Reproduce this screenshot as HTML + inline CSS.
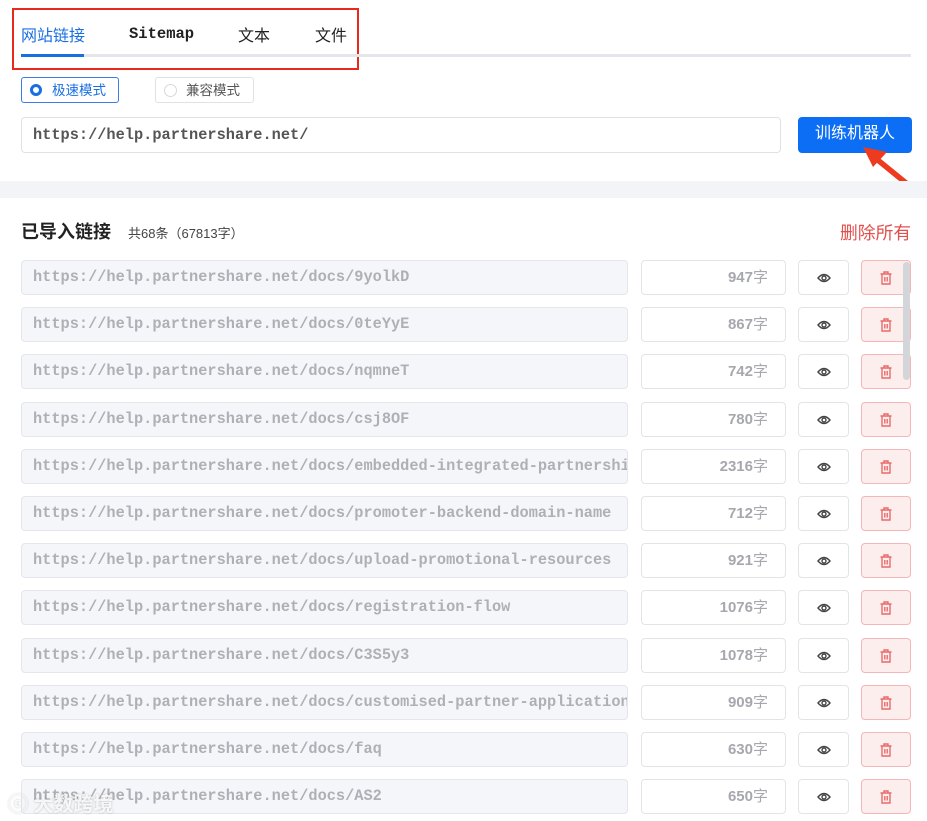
<!DOCTYPE html>
<html><head><meta charset="utf-8"><style>
*{box-sizing:border-box;margin:0;padding:0}
body{width:927px;height:821px;overflow:hidden;background:#fff;font-family:"Liberation Sans","Noto Sans CJK SC",sans-serif;position:relative}
.abs{position:absolute}
.mono{font-family:"Liberation Mono","Noto Sans CJK SC",monospace}
.row{position:absolute;left:0;width:927px;height:35px}
.url{position:absolute;left:21px;top:0;width:607px;height:35px;background:#f5f6f9;border:1px solid #e4e6eb;border-radius:4px;color:#aeb0b5;font-size:15.3px;font-weight:bold;line-height:33px;padding-left:11px;white-space:nowrap;overflow:hidden}
.cnt{position:absolute;left:641px;top:0;width:145px;height:35px;border:1px solid #e2e4e8;border-radius:4px;text-align:right;padding-right:17px;line-height:33px;color:#a6a8ad;font-size:15px;font-weight:bold}
.cnt span{font-weight:normal}
.eye{position:absolute;left:798px;top:0;width:51px;height:35px;border:1px solid #e2e4e8;border-radius:4px}
.del{position:absolute;left:861px;top:0;width:50px;height:35px;border:1px solid #f4b6b6;background:#fdeeee;border-radius:4px}
.eye svg,.del svg{position:absolute;left:50%;top:50%;transform:translate(-50%,-50%)}
</style></head><body>
<div class="abs" style="left:12px;top:8px;width:347px;height:62px;border:2px solid #e8291c"></div>
<div class="abs" style="left:21px;top:22px;font-size:16px;color:#1a6fe0">网站链接</div>
<div class="abs mono" style="left:129px;top:25px;font-size:15.5px;font-weight:bold;color:#222">Sitemap</div>
<div class="abs" style="left:238px;top:22px;font-size:16px;color:#222">文本</div>
<div class="abs" style="left:315px;top:22px;font-size:16px;color:#222">文件</div>
<div class="abs" style="left:21px;top:54px;width:890px;height:3px;background:#e4e6ea"></div>
<div class="abs" style="left:21px;top:54px;width:63px;height:3px;background:#1a6fe0"></div>
<div class="abs" style="left:21px;top:77px;width:98px;height:26px;border:1px solid #3b7de0;border-radius:3px"></div>
<div class="abs" style="left:30px;top:84px;width:12px;height:12px;border-radius:50%;border:3.5px solid #1a6fe0;background:#fff"></div>
<div class="abs" style="left:52px;top:79px;font-size:13.5px;color:#1a6fe0">极速模式</div>
<div class="abs" style="left:155px;top:77px;width:99px;height:26px;border:1px solid #e0e2e6;border-radius:3px"></div>
<div class="abs" style="left:164px;top:84px;width:13px;height:13px;border-radius:50%;border:1px solid #d6d8dc"></div>
<div class="abs" style="left:186px;top:79px;font-size:13.5px;color:#555">兼容模式</div>
<div class="abs mono" style="left:21px;top:117px;width:760px;height:36px;border:1px solid #dfe1e5;border-radius:4px;padding-left:11px;line-height:35px;font-size:15.3px;font-weight:bold;color:#555">https://help.partnershare.net/</div>
<div class="abs" style="left:798px;top:117px;width:114px;height:36px;background:#0b6ef5;border-radius:4px;color:#fff;font-size:16px;text-align:center;line-height:34px">训练机器人</div>
<svg class="abs" style="left:858px;top:140px" width="60" height="52"><path d="M53 47 L16 17" stroke="#ee3a1e" stroke-width="5.5"/><path d="M5 7 L29 12 L15 27 Z" fill="#ee3a1e"/></svg>
<div class="abs" style="left:0;top:181px;width:927px;height:17px;background:#f3f4f7"></div>
<div class="abs" style="left:21px;top:218px;font-size:18px;font-weight:bold;color:#222">已导入链接</div>
<div class="abs" style="left:128px;top:223px;font-size:13px;color:#444">共68条（67813字）</div>
<div class="abs" style="left:840px;top:219px;font-size:17.8px;color:#e0504e">删除所有</div>
<div id="rows"></div>
<div class="abs" style="left:903px;top:262px;width:7px;height:118px;border-radius:4px;background:#d4d5d8"></div>
<div class="abs" style="left:8px;top:788px;font-size:20px;color:rgba(255,255,255,.85);font-weight:bold;text-shadow:0 0 2px rgba(0,0,0,.25)">ⓒ 大数跨境</div>
<script>
var d=[["9yolkD",947],["0teYyE",867],["nqmneT",742],["csj8OF",780],["embedded-integrated-partnership",2316],["promoter-backend-domain-name",712],["upload-promotional-resources",921],["registration-flow",1076],["C3S5y3",1078],["customised-partner-application",909],["faq",630],["AS2",650]];
var h="";
var eye='<svg width="14" height="10" viewBox="0 0 14 10"><path d="M1 5 Q7 -2 13 5 Q7 12 1 5Z" fill="none" stroke="#444" stroke-width="1.4"/><circle cx="7" cy="5" r="2" fill="none" stroke="#444" stroke-width="1.4"/></svg>';
var tr='<svg width="13" height="15" viewBox="0 0 13 15"><path d="M1 3.5H12M4.5 3.5V1.5H8.5V3.5M2.5 3.5V13.5H10.5V3.5M5.3 6.5V11M7.7 6.5V11" fill="none" stroke="#e86a6a" stroke-width="1.4"/></svg>';
for(var i=0;i<d.length;i++){var t=260+Math.round(i*47.2);
h+='<div class="row" style="top:'+t+'px"><div class="url mono">https://help.partnershare.net/docs/'+d[i][0]+'</div><div class="cnt">'+d[i][1]+'<span>字</span></div><div class="eye">'+eye+'</div><div class="del">'+tr+'</div></div>';}
document.getElementById("rows").innerHTML=h;
</script>
</body></html>
